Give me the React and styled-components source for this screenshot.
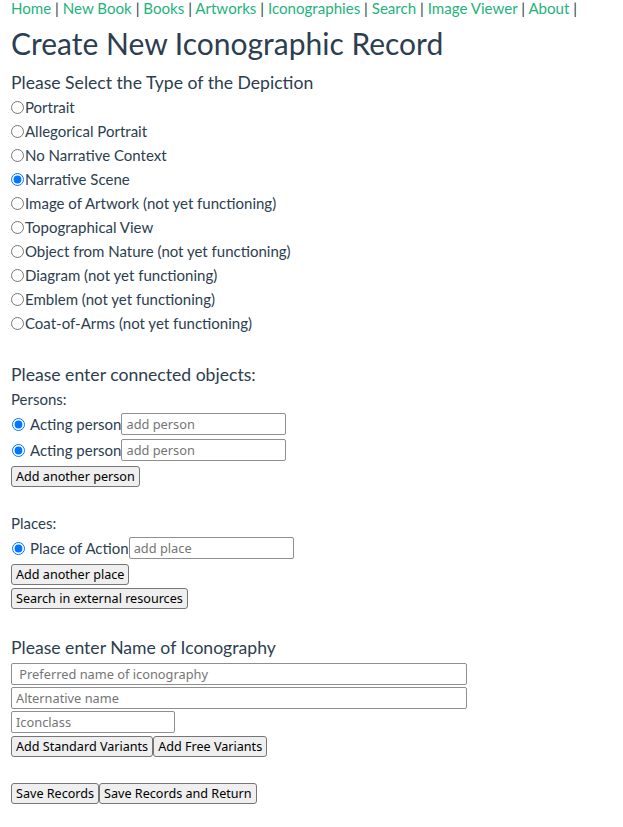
import React, { useState } from 'react';
import styled, { createGlobalStyle } from 'styled-components';

const GlobalStyle = createGlobalStyle`
  body {
    margin: 0;
    background: #ffffff;
    font-family: Lato, "Noto Sans", sans-serif;
    color: #2c3e50;
  }
`;

const Page = styled.div`
  padding: 0 11px;
  display: flex;
  flex-direction: column;
  align-items: flex-start;
`;

const Nav = styled.nav`
  font-size: 15.1px;
  line-height: 17px;
  color: #2c3e50;
  white-space: nowrap;
`;

const NavLink = styled.a`
  color: #1fb37d;
  text-decoration: none;
`;

const Title = styled.h1`
  font-size: 30px;
  font-weight: 400;
  line-height: 36px;
  margin: 8px 0 10px;
`;

const SectionTitle = styled.h4`
  font-size: 17.6px;
  font-weight: 400;
  line-height: 24px;
  margin: ${p => p.$top || 0}px 0 0;
`;

const Label = styled.div`
  font-size: 15px;
  line-height: 24px;
`;

const TypeList = styled.div`
  display: flex;
  flex-direction: column;
`;

const TypeOption = styled.label`
  display: flex;
  align-items: center;
  font-size: 15px;
  line-height: 24px;
`;

const Radio = styled.input.attrs({ type: 'radio' })`
  width: 13px;
  height: 13px;
  margin: 0 1px 0 0;
  accent-color: #0075ff;
`;

const ObjectRow = styled.div`
  display: flex;
  align-items: center;
  height: 26px;
  font-size: 15px;
`;

const RowRadio = styled(Radio)`
  margin: 0 5px 0 1px;
`;

const TextField = styled.input`
  box-sizing: border-box;
  width: ${p => p.$width}px;
  height: 22px;
  padding: 0 4px;
  border: 1px solid #8f8f8f;
  border-radius: 2px;
  font-family: "Noto Sans", "Open Sans", sans-serif;
  font-size: 12.8px;
  color: #2c3e50;
  &::placeholder {
    color: #757575;
  }
`;

const FieldStack = styled.div`
  display: flex;
  flex-direction: column;
  gap: 2px;
  margin-top: 3px;
`;

const ButtonRow = styled.div`
  display: flex;
  margin-top: ${p => p.$top || 0}px;
`;

const Button = styled.button`
  box-sizing: border-box;
  height: 21px;
  padding: 0 4px;
  border: 1px solid #767676;
  border-radius: 3px;
  background: #efefef;
  font-family: "Noto Sans", "Open Sans", sans-serif;
  font-size: 12.6px;
  color: #000;
  line-height: 19px;
`;

const Spacer = styled.div`
  height: ${p => p.$h}px;
`;

const links = ['Home', 'New Book', 'Books', 'Artworks', 'Iconographies', 'Search', 'Image Viewer', 'About'];

const depictionTypes = [
  'Portrait',
  'Allegorical Portrait',
  'No Narrative Context',
  'Narrative Scene',
  'Image of Artwork (not yet functioning)',
  'Topographical View',
  'Object from Nature (not yet functioning)',
  'Diagram (not yet functioning)',
  'Emblem (not yet functioning)',
  'Coat-of-Arms (not yet functioning)',
];

function App() {
  const [type, setType] = useState('Narrative Scene');

  return (
    <Page>
      <GlobalStyle />
      <Nav>
        {links.map(link => (
          <React.Fragment key={link}>
            <NavLink href="#">{link}</NavLink>{' | '}
          </React.Fragment>
        ))}
      </Nav>
      <Title>Create New Iconographic Record</Title>
      <SectionTitle>Please Select the Type of the Depiction</SectionTitle>
      <TypeList>
        {depictionTypes.map(t => (
          <TypeOption key={t}>
            <Radio name="type" checked={type === t} onChange={() => setType(t)} />
            {t}
          </TypeOption>
        ))}
      </TypeList>

      <SectionTitle $top={28}>Please enter connected objects:</SectionTitle>
      <Label>Persons:</Label>
      <ObjectRow>
        <RowRadio name="p1" defaultChecked />Acting person
        <TextField $width={165} placeholder="add person" />
      </ObjectRow>
      <ObjectRow>
        <RowRadio name="p2" defaultChecked />Acting person
        <TextField $width={165} placeholder="add person" />
      </ObjectRow>
      <ButtonRow $top={3}>
        <Button>Add another person</Button>
      </ButtonRow>

      <Spacer $h={24} />
      <Label>Places:</Label>
      <ObjectRow>
        <RowRadio name="pl1" defaultChecked />Place of Action
        <TextField $width={165} placeholder="add place" />
      </ObjectRow>
      <ButtonRow $top={3}>
        <Button>Add another place</Button>
      </ButtonRow>
      <ButtonRow $top={3}>
        <Button>Search in external resources</Button>
      </ButtonRow>

      <SectionTitle $top={27}>Please enter Name of Iconography</SectionTitle>
      <FieldStack>
        <TextField $width={456} placeholder=" Preferred name of iconography" />
        <TextField $width={456} placeholder="Alternative name" />
        <TextField $width={164} placeholder="Iconclass" />
      </FieldStack>
      <ButtonRow $top={3}>
        <Button>Add Standard Variants</Button>
        <Button>Add Free Variants</Button>
      </ButtonRow>
      <ButtonRow $top={26}>
        <Button>Save Records</Button>
        <Button>Save Records and Return</Button>
      </ButtonRow>
    </Page>
  );
}

export default App;
